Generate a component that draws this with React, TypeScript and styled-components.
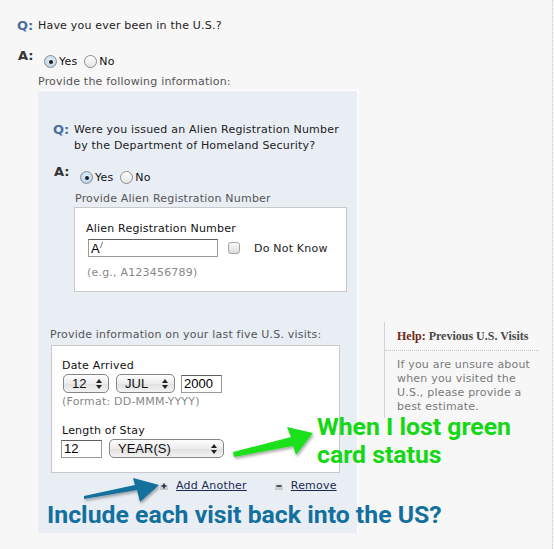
import React from 'react'
import styled, { createGlobalStyle } from 'styled-components'

const GlobalStyle = createGlobalStyle`
  html, body {
    margin: 0;
    padding: 0;
    background: #f7f7f7;
  }
  body {
    font-family: "DejaVu Sans", Verdana, sans-serif;
    font-size: 11px;
    letter-spacing: 0.2px;
    color: #222;
  }
`

const Radio = ({ checked, label }: { checked?: boolean; label: string }) => (
  <RadioItem>
    <RadioDot $checked={checked} />
    <span>{label}</span>
  </RadioItem>
)

const Updown = () => (
  <svg width="6" height="10" viewBox="0 0 6 10">
    <path d="M3 0 L6 4 L0 4 Z" fill="#222" />
    <path d="M3 10 L6 6 L0 6 Z" fill="#222" />
  </svg>
)

const Toggle = ({ minus }: { minus?: boolean }) => (
  <svg width="8" height="8" viewBox="0 0 8 8">
    <defs>
      <linearGradient id="tg" x1="0" y1="0" x2="0" y2="1">
        <stop offset="0" stopColor="#f0f0f0" />
        <stop offset="1" stopColor="#c4c4c4" />
      </linearGradient>
    </defs>
    <rect x="0" y="0" width="8" height="8" fill="url(#tg)" />
    <rect x="1.5" y="3.2" width="5" height="1.6" fill="#24304f" />
    {!minus && <rect x="3.2" y="1.5" width="1.6" height="5" fill="#24304f" />}
  </svg>
)

const App = () => {
  return (
    <Page>
      <GlobalStyle />
      <QRow>
        <QMark>Q:</QMark>
        <QText>Have you ever been in the U.S.?</QText>
      </QRow>
      <ARow $mt={14}>
        <AMark>A:</AMark>
        <Radios>
          <Radio checked label="Yes" />
          <Radio label="No" />
        </Radios>
      </ARow>

      <Indent>
        <Hint>Provide the following information:</Hint>
        <Columns>
          <Panel>
            <QRow>
              <QMark>Q:</QMark>
              <QText>
                Were you issued an Alien Registration Number
                <br />
                by the Department of Homeland Security?
              </QText>
            </QRow>
            <ARow $mt={10}>
              <AMark>A:</AMark>
              <Radios>
                <Radio checked label="Yes" />
                <Radio label="No" />
              </Radios>
            </ARow>

            <SubBlock>
              <Hint>Provide Alien Registration Number</Hint>
              <Box $pad="14px 11px 11px" $mt={1} $ml={-1}>
                <Label>Alien Registration Number</Label>
                <FieldRow $mt={3} $gap={10}>
                  <Field $w={130} $ml={2}>
                    A<Caret />
                  </Field>
                  <Check />
                  <CheckLabel>Do Not Know</CheckLabel>
                </FieldRow>
                <Note $mt={9} $ml={1}>(e.g., A123456789)</Note>
              </Box>
            </SubBlock>

            <Visits>
              <Hint>Provide information on your last five U.S. visits:</Hint>
              <Box $pad="13px 10px 14px" $w={289} $mt={3} $ml={1}>
                <Label>Date Arrived</Label>
                <FieldRow $mt={1} $gap={6}>
                  <Select $w={46}>
                    <span>12</span>
                    <Updown />
                  </Select>
                  <Select $w={59}>
                    <span>JUL</span>
                    <Updown />
                  </Select>
                  <Field $w={41}>2000</Field>
                </FieldRow>
                <Note $mt={2}>(Format: DD-MMM-YYYY)</Note>
                <Label $mt={15}>Length of Stay</Label>
                <FieldRow $mt={1} $gap={6}>
                  <Field $w={41} $ml={-1}>12</Field>
                  <Select $w={115}>
                    <span>YEAR(S)</span>
                    <Updown />
                  </Select>
                </FieldRow>
              </Box>
              <Links>
                <LinkItem>
                  <Toggle />
                  <a>Add Another</a>
                </LinkItem>
                <LinkItem>
                  <Toggle minus />
                  <a>Remove</a>
                </LinkItem>
              </Links>
            </Visits>
          </Panel>

          <Help>
            <HelpTitle>
              <em>Help:</em> Previous U.S. Visits
            </HelpTitle>
            <HelpText>
              If you are unsure about
              <br />
              when you visited the
              <br />
              U.S., please provide a
              <br />
              best estimate.
            </HelpText>
          </Help>
        </Columns>
      </Indent>

      <Arrows width="554" height="549" viewBox="0 0 554 549">
        <defs>
          <filter id="sh" x="-20%" y="-20%" width="140%" height="140%">
            <feDropShadow dx="1" dy="2" stdDeviation="1.5" floodColor="#000" floodOpacity="0.35" />
          </filter>
        </defs>
        <path
          d="M234 457 L293 446 L296 455 L313 433 L287 427 L291 437 L233 452 Z"
          fill="#1ee01e"
          filter="url(#sh)"
        />
        <path
          d="M84 499 L137 490 L140 502 L159 485 L133 478 L135 485 L84 496 Z"
          fill="#136f9c"
          filter="url(#sh)"
        />
      </Arrows>
      <GreenNote>
        <NoteLine>When I lost green</NoteLine>
        <NoteLine>card status</NoteLine>
      </GreenNote>
      <BlueNote>Include each visit back into the US?</BlueNote>
    </Page>
  )
}

export default App

const Page = styled.div`
  position: relative;
  width: 553px;
  height: 549px;
  box-sizing: border-box;
  padding: 18px 0 0 17px;
  border-right: 1px dotted #c8c8c8;
  overflow: hidden;
`

const QRow = styled.div`
  display: flex;
  align-items: flex-start;
`

const QMark = styled.div`
  width: 21px;
  flex: none;
  font-weight: bold;
  font-size: 13px;
  letter-spacing: 0;
  line-height: 16px;
  color: #4c6e9f;
`

const QText = styled.div`
  line-height: 16px;
  color: #222;
`

const ARow = styled.div<{ $mt: number }>`
  display: flex;
  align-items: flex-start;
  margin-top: ${(p) => p.$mt}px;
`

const AMark = styled.div`
  width: 26px;
  flex: none;
  margin-left: 1px;
  font-weight: bold;
  font-size: 13px;
  letter-spacing: 0;
  line-height: 16px;
  color: #333;
`

const Radios = styled.div`
  display: flex;
  gap: 7px;
  padding-top: 7px;
`

const RadioItem = styled.label`
  display: flex;
  align-items: center;
  gap: 2px;
  line-height: 13px;
  color: #111;
`

const RadioDot = styled.span<{ $checked?: boolean }>`
  position: relative;
  width: 13px;
  height: 13px;
  box-sizing: border-box;
  border-radius: 50%;
  border: 1px solid #8d8d8d;
  background: ${(p) =>
    p.$checked
      ? 'radial-gradient(circle at 50% 40%, #eaf3fc, #a9c6e4)'
      : 'linear-gradient(#ffffff, #e4e4e4)'};
  &::after {
    content: "";
    display: ${(p) => (p.$checked ? 'block' : 'none')};
    position: absolute;
    left: 3.5px;
    top: 3.5px;
    width: 4px;
    height: 4px;
    border-radius: 50%;
    background: #1d1d1d;
  }
`

const Indent = styled.div`
  margin-left: 21px;
  margin-top: 7px;
`

const Hint = styled.div`
  color: #555;
  line-height: 14px;
`

const Columns = styled.div`
  display: flex;
  align-items: flex-start;
  margin-top: 2px;
`

const Panel = styled.div`
  width: 319px;
  height: 442px;
  box-sizing: border-box;
  flex: none;
  background: #e9eef5;
  box-shadow: 1px -1px 0 #ffffff;
  padding: 31px 10px 0 15px;
`

const SubBlock = styled.div`
  margin-left: 22px;
  margin-top: 8px;
`

const Box = styled.div<{ $pad: string; $w?: number; $mt: number; $ml: number }>`
  background: #fff;
  border: 1px solid #c9c9c9;
  padding: ${(p) => p.$pad};
  margin-top: ${(p) => p.$mt}px;
  margin-left: ${(p) => p.$ml}px;
  width: ${(p) => (p.$w ? `${p.$w}px` : 'auto')};
  box-sizing: border-box;
`

const Label = styled.div<{ $mt?: number }>`
  line-height: 14px;
  color: #111;
  margin-top: ${(p) => p.$mt ?? 0}px;
`

const FieldRow = styled.div<{ $mt: number; $gap: number }>`
  display: flex;
  align-items: center;
  gap: ${(p) => p.$gap}px;
  margin-top: ${(p) => p.$mt}px;
  color: #222;
`

const CheckLabel = styled.span`
  margin-left: 4px;
`

const Field = styled.div<{ $w: number; $ml?: number }>`
  display: flex;
  align-items: center;
  width: ${(p) => p.$w}px;
  height: 18px;
  box-sizing: border-box;
  margin-left: ${(p) => p.$ml ?? 0}px;
  padding-left: 2px;
  background: #fff;
  border: 1px solid #9a9a9a;
  border-top-color: #5e5e5e;
  font-family: "Liberation Sans", Arial, sans-serif;
  font-size: 13px;
  letter-spacing: 0;
  color: #000;
`

const Caret = styled.span`
  display: inline-block;
  width: 1px;
  height: 6px;
  margin: -6px 0 0 1px;
  background: #777;
  transform: skewX(-20deg);
`

const Check = styled.span`
  width: 12px;
  height: 12px;
  box-sizing: border-box;
  border: 1px solid #a5a5a5;
  border-radius: 3px;
  background: linear-gradient(#fafafa, #dcdcdc);
`

const Select = styled.div<{ $w: number }>`
  display: flex;
  align-items: center;
  justify-content: space-between;
  width: ${(p) => p.$w}px;
  height: 19px;
  box-sizing: border-box;
  padding: 0 6px 0 8px;
  margin-left: 1px;
  border: 1px solid #858585;
  border-radius: 5px;
  background: linear-gradient(#fefefe, #ececec 50%, #e0e0e0 52%, #f3f3f3);
  font-family: "Liberation Sans", Arial, sans-serif;
  font-size: 13px;
  letter-spacing: 0;
  color: #111;
`

const Note = styled.div<{ $mt: number; $ml?: number }>`
  color: #888;
  line-height: 14px;
  margin-top: ${(p) => p.$mt}px;
  margin-left: ${(p) => p.$ml ?? 0}px;
`

const Visits = styled.div`
  margin-top: 36px;
  margin-left: -3px;
`

const Links = styled.div`
  display: flex;
  gap: 28px;
  padding-left: 110px;
  margin-top: 6px;
`

const LinkItem = styled.div`
  display: flex;
  align-items: center;
  gap: 8px;
  a {
    color: #1c2a52;
    text-decoration: underline;
    line-height: 14px;
  }
`

const Help = styled.div`
  margin-left: 27px;
  margin-top: 231px;
  width: 154px;
  border-left: 1px solid #d4d4d4;
  padding-bottom: 4px;
`

const HelpTitle = styled.div`
  font-family: "Liberation Serif", "Times New Roman", serif;
  font-weight: bold;
  font-size: 12px;
  letter-spacing: 0;
  line-height: 14px;
  color: #4a4a4a;
  padding: 7px 0 7px 12px;
  border-bottom: 1px dotted #c4c4c4;
  em {
    font-style: normal;
    color: #6e2a18;
  }
`

const HelpText = styled.div`
  color: #7a7a7a;
  line-height: 14px;
  padding: 7px 0 0 12px;
`

const Arrows = styled.svg`
  position: absolute;
  left: 0;
  top: 0;
  pointer-events: none;
`

const Annotation = styled.div`
  position: absolute;
  font-family: Roboto, "Open Sans", sans-serif;
  font-weight: bold;
  font-size: 24.8px;
  line-height: 28px;
  letter-spacing: 0;
  white-space: nowrap;
`

const GreenNote = styled(Annotation)`
  left: 317px;
  top: 415px;
  color: #13d813;
  line-height: 24px;
  display: flex;
  flex-direction: column;
  gap: 4px;
`

const NoteLine = styled.div``

const BlueNote = styled(Annotation)`
  left: 47px;
  top: 501px;
  color: #13709e;
`
